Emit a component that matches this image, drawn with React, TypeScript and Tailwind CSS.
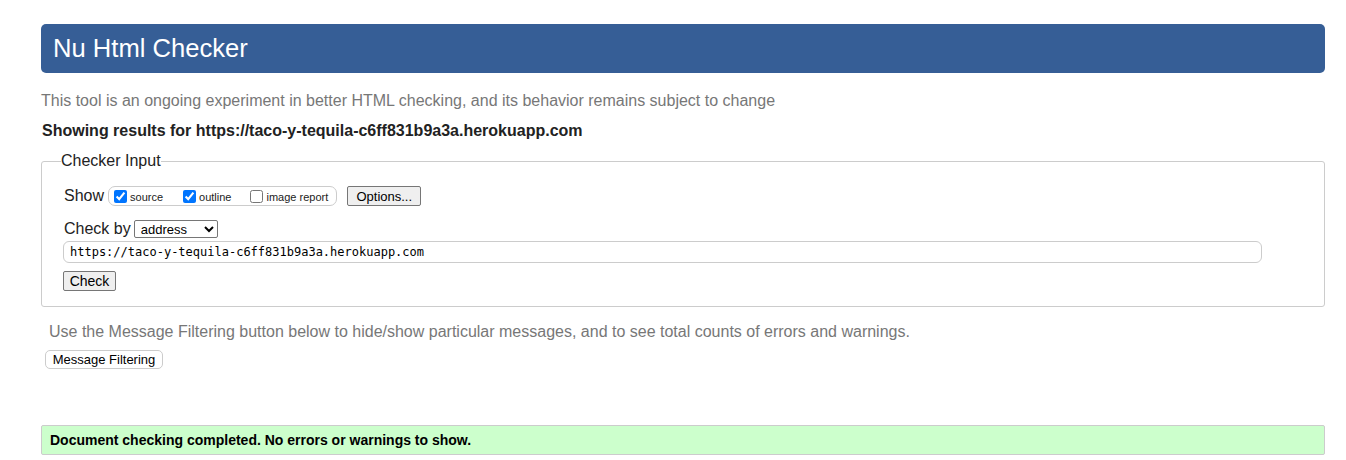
import React from 'react';

const font = { fontFamily: '"Liberation Sans", Arial, sans-serif' };

export default function App(): React.JSX.Element {
  return (
    <div className="min-h-[460px] bg-white pt-[24px] pl-[41px] pr-[21px] text-[16px] text-[#222]" style={font}>
      <header className="flex h-[49px] items-center rounded-[5px] bg-[#365e96] pl-[12px]">
        <h1 className="text-[25.6px] font-normal leading-none text-white">Nu Html Checker</h1>
      </header>

      <p className="mt-[19px] leading-[18px] text-[#777]">
        This tool is an ongoing experiment in better HTML checking, and its behavior remains subject to change
      </p>
      <p className="mt-[12px] pl-[1px] font-bold leading-[18px] text-[#222]">
        Showing results for https://taco-y-tequila-c6ff831b9a3a.herokuapp.com
      </p>

      <fieldset className="mt-[12px] rounded-[3px] border border-[#ccc] pb-[15px] pl-[21px] pr-[62px]">
        <legend className="-ml-[2px] px-0 leading-[18px] text-[#222]">Checker Input</legend>

        <div className="mt-[16px] flex h-[20px] items-center">
          <span className="mr-[4px] ml-[1px] leading-none">Show</span>
          <div className="flex h-[20px] items-center rounded-[7px] border border-[#ccc] pl-[5px] pr-[8px] text-[11px]">
            <label className="flex items-center">
              <input type="checkbox" defaultChecked className="m-0 h-[13px] w-[13px]" />
              <span className="ml-[3px] mt-[2px]">source</span>
            </label>
            <label className="ml-[20px] flex items-center">
              <input type="checkbox" defaultChecked className="m-0 h-[13px] w-[13px]" />
              <span className="ml-[3px] mt-[2px]">outline</span>
            </label>
            <label className="ml-[19px] flex items-center">
              <input type="checkbox" className="m-0 h-[13px] w-[13px]" />
              <span className="ml-[3px] mt-[2px]">image report</span>
            </label>
          </div>
          <button className="ml-[10px] h-[20px] w-[74px] rounded-[2px] border border-[#767676] bg-[#efefef] text-[13px] leading-none text-black">
            Options...
          </button>
        </div>

        <div className="mt-[13px] flex h-[19px] items-center">
          <span className="ml-[1px] mr-[3px] leading-none">Check by</span>
          <select
            defaultValue="address"
            className="h-[18px] w-[84px] rounded-[2px] border border-[#767676] bg-white pl-[2px] text-[13px] leading-none text-black"
          >
            <option value="address">address</option>
            <option value="file">file upload</option>
            <option value="text">text input</option>
          </select>
        </div>

        <input
          type="text"
          defaultValue="https://taco-y-tequila-c6ff831b9a3a.herokuapp.com"
          className="mt-[3px] block h-[22px] w-full rounded-[6px] border border-[#ccc] px-[6px] text-[12px] text-black outline-none"
          style={{ fontFamily: '"DejaVu Sans Mono", "Liberation Mono", monospace' }}
        />

        <button className="mt-[8px] block h-[20px] w-[53px] rounded-[2px] border border-[#767676] bg-[#efefef] text-[14px] leading-none text-black">
          Check
        </button>
      </fieldset>

      <p className="mt-[16px] pl-[8px] leading-[18px] text-[#777]">
        Use the Message Filtering button below to hide/show particular messages, and to see total counts of errors and warnings.
      </p>
      <button className="ml-[4px] mt-[9px] block h-[19px] w-[118px] rounded-[5px] border border-[#ccc] bg-white text-[13px] leading-none text-black">
        Message Filtering
      </button>

      <div className="mt-[56px] flex h-[30px] items-center rounded-[2px] border border-[#ccc] bg-[#ccffcc] pl-[8px] text-[14px] font-bold text-black">
        Document checking completed. No errors or warnings to show.
      </div>
    </div>
  );
}
